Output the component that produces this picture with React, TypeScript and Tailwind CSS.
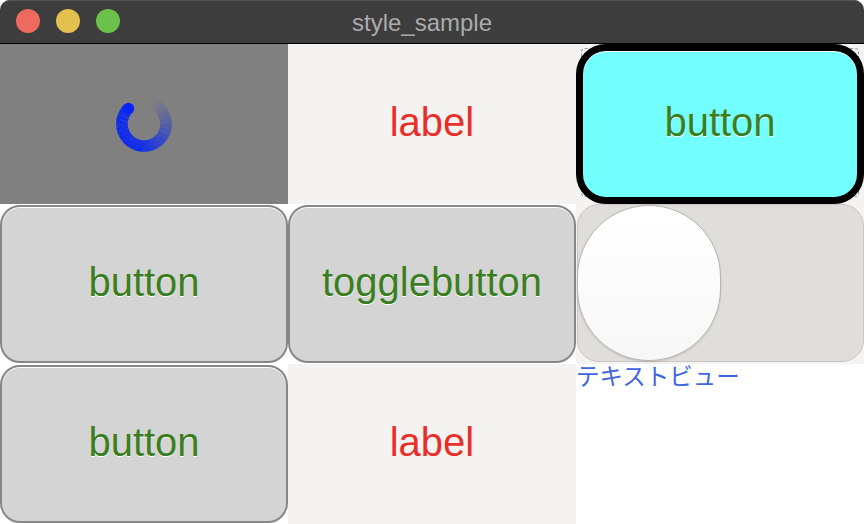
import React from 'react';

const LATIN = { fontFamily: '"Liberation Sans", Arial, sans-serif' };

// spinner arc: solid from the cap at 10:30, fading out counter-clockwise
function Spinner() {
  const cx = 28;
  const cy = 28;
  const r = 22;
  const steps = 150;
  const span = 300;
  const start = 315;
  const pt = (a: number) => {
    const rad = (a * Math.PI) / 180;
    return [cx + r * Math.sin(rad), cy - r * Math.cos(rad)];
  };
  const segs = [];
  for (let i = 0; i < steps; i++) {
    const t = i / steps;
    const a1 = start - span * t;
    const a2 = start - span * ((i + 1) / steps) - 0.3;
    const [x1, y1] = pt(a1);
    const [x2, y2] = pt(a2);
    const op = t < 0.42 ? 1 : Math.max(0, 1 - (t - 0.42) / 0.58) ** 1.4;
    segs.push(
      <path
        key={i}
        d={`M${x1} ${y1} A${r} ${r} 0 0 0 ${x2} ${y2}`}
        stroke="#0524f7"
        strokeOpacity={op}
        strokeWidth={11.5}
        fill="none"
      />
    );
  }
  const [sx, sy] = pt(start);
  return (
    <svg width="58" height="58" viewBox="-1 -1 58 58">
      {segs}
      <circle cx={sx} cy={sy} r={5.75} fill="#0524f7" />
    </svg>
  );
}

function GrayButton({ label }: { label: string }) {
  return (
    <div className="w-full h-full py-px">
      <button
        className="w-full h-full rounded-[20px] border-2 border-[#878787] bg-[#d4d4d4] shadow-[inset_0_1px_0_#ffffff] flex items-center justify-center pb-[5px]"
        style={LATIN}
      >
        <span className="text-[40px] text-[#3a7e21] [text-shadow:0_1px_0_rgba(255,255,255,0.95)]">{label}</span>
      </button>
    </div>
  );
}

function Label() {
  return (
    <div className="w-full h-full bg-[#f4f3f2] flex items-center justify-center pb-[5px]" style={LATIN}>
      <span className="text-[40px] text-[#e8302a]">label</span>
    </div>
  );
}

export default function App() {
  return (
    <div className="w-[864px] h-[524px] overflow-hidden bg-white">
      {/* title bar */}
      <div className="relative h-[44px] rounded-t-[10px] bg-[#3d3d3d] border-b border-black shadow-[inset_0_1px_0_#565656] flex items-center">
        <div className="flex items-center gap-4 pl-4 -mt-px">
          <div className="w-6 h-6 rounded-full bg-[#ee6a5e]" />
          <div className="w-6 h-6 rounded-full bg-[#e4c04e]" />
          <div className="w-6 h-6 rounded-full bg-[#6bc14a]" />
        </div>
        <div className="absolute inset-0 flex items-center justify-center pt-[3px] pr-[20px]">
          <span className="text-[24px] text-[#ababab]" style={LATIN}>style_sample</span>
        </div>
      </div>

      <div className="grid grid-cols-3 grid-rows-[160px_160px_160px]">
        {/* row 1 */}
        <div className="bg-[#808080] flex items-center justify-center">
          <Spinner />
        </div>
        <Label />
        <div className="relative bg-[#f4f3f2]">
          <div className="absolute left-[5px] top-[4px] right-[5px] bottom-[7px] rounded-[4px] border border-dashed border-[#9a9a9a]" />
          <button
            className="relative w-full h-full rounded-[30px] border-[7px] border-black bg-[#72fffd] shadow-[inset_0_1px_0_#ffffff] flex items-center justify-center pb-[4px]"
            style={LATIN}
          >
            <span className="text-[40px] text-[#3a7e21] [text-shadow:0_1px_0_rgba(255,255,255,0.95)]">button</span>
          </button>
        </div>

        {/* row 2 */}
        <GrayButton label="button" />
        <GrayButton label="togglebutton" />
        <div className="bg-[#f4f3f2] pl-px pb-[2px]">
          <div className="w-full h-full rounded-[22px] border border-[#cbc6c1] bg-[#e0dedb] flex items-center">
            <div className="w-[144px] h-[156px] -ml-px rounded-full border border-[#bbb3ad] bg-gradient-to-b from-white to-[#f7f7f7] shadow-[0_1px_2px_rgba(0,0,0,0.15)]" />
          </div>
        </div>

        {/* row 3 */}
        <GrayButton label="button" />
        <Label />
        <div className="bg-white">
          <span
            className="text-[23.5px] leading-[23px] text-[#3f67dd]"
            style={{ fontFamily: '"Noto Sans CJK JP", "Liberation Sans", sans-serif' }}
          >
            テキストビュー
          </span>
        </div>
      </div>
    </div>
  );
}
